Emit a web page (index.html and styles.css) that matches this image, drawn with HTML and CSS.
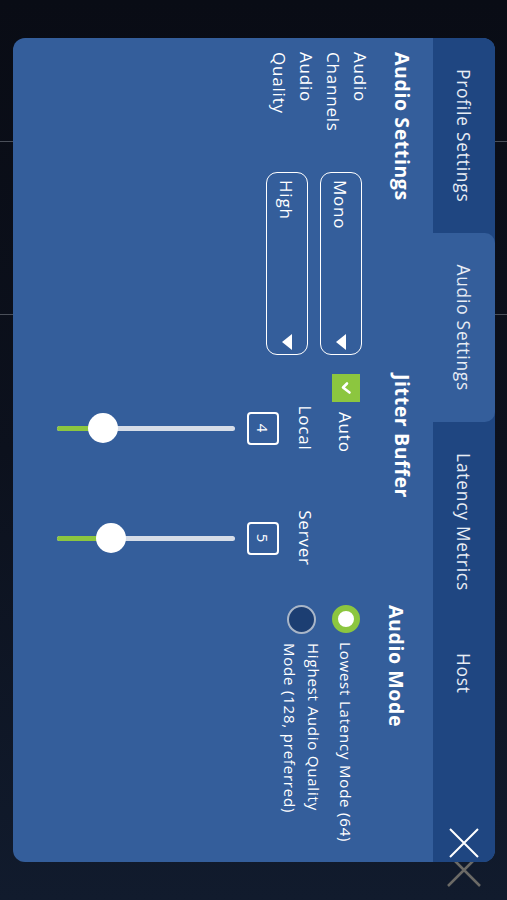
FILE: index.html
```html
<!DOCTYPE html>
<html lang="en">
<head>
    <meta charset="UTF-8">
    <meta name="viewport" content="width=device-width, initial-scale=1.0">
    <title>Audio Settings</title>
    <link rel="stylesheet" href="styles.css">
</head>
<body>
    <div class="screen">
        <div class="stage">
            <svg class="ghost-close" width="36" height="36" viewBox="0 0 36 36">
                <path d="M2 2 L34 34 M34 2 L2 34" stroke="#6b6a66" stroke-width="2.5" fill="none"/>
            </svg>

            <div class="card">
                <div class="tabs">
                    <div class="tab">Profile Settings</div>
                    <div class="tab active">Audio Settings</div>
                    <div class="tab">Latency Metrics</div>
                    <div class="tab">Host</div>
                    <div class="close">
                        <svg width="30" height="30" viewBox="0 0 30 30">
                            <path d="M1 1 L29 29 M29 1 L1 29" stroke="#fff" stroke-width="2" fill="none"/>
                        </svg>
                    </div>
                </div>

                <div class="panel">
                    <section class="col">
                        <h3>Audio Settings</h3>
                        <div class="fields">
                            <label>Audio Channels</label>
                            <div class="select"><span>Mono</span><i class="caret"></i></div>
                            <label>Audio Quality</label>
                            <div class="select"><span>High</span><i class="caret"></i></div>
                        </div>
                    </section>

                    <section class="col">
                        <h3>Jitter Buffer</h3>
                        <div class="check-row">
                            <div class="checkbox">
                                <svg width="28" height="28" viewBox="0 0 28 28">
                                    <path d="M9.5 13 L13.5 17 L18.5 10.5" stroke="#fff" stroke-width="2.6" fill="none" stroke-linecap="round" stroke-linejoin="round"/>
                                </svg>
                            </div>
                            <span>Auto</span>
                        </div>
                        <div class="buffers">
                            <div class="buffer">
                                <div class="buffer-label">Local</div>
                                <div class="value">4</div>
                                <div class="slider">
                                    <div class="fill" style="height: 26%"></div>
                                    <div class="thumb" style="bottom: 26%"></div>
                                </div>
                            </div>
                            <div class="buffer">
                                <div class="buffer-label">Server</div>
                                <div class="value">5</div>
                                <div class="slider">
                                    <div class="fill" style="height: 30.5%"></div>
                                    <div class="thumb" style="bottom: 30.5%"></div>
                                </div>
                            </div>
                        </div>
                    </section>

                    <section class="col col-mode">
                        <h3>Audio Mode</h3>
                        <div class="radio-row">
                            <div class="radio on"></div>
                            <span>Lowest Latency Mode (64)</span>
                        </div>
                        <div class="radio-row second">
                            <div class="radio"></div>
                            <span>Highest Audio Quality<br>Mode (128, preferred)</span>
                        </div>
                    </section>
                </div>
            </div>
        </div>
    </div>
</body>
</html>
```

FILE: styles.css
```css
* {
    box-sizing: border-box;
}
body {
    margin: 0;
    background: #0d1422;
    font-family: "Open Sans", Lato, sans-serif;
    color: #fff;
    letter-spacing: 0.8px;
}
.screen {
    width: 507px;
    height: 900px;
    overflow: hidden;
}
/* the app is in landscape, shown turned a quarter clockwise */
.stage {
    width: 900px;
    height: 507px;
    padding: 12px 38px 13px;
    transform-origin: 0 0;
    transform: translateX(507px) rotate(90deg);
    background:
        linear-gradient(90deg, transparent 141px, #4a4f59 141px, #4a4f59 142px, transparent 142px),
        linear-gradient(90deg, transparent 314px, #4a4f59 314px, #4a4f59 315px, transparent 315px),
        linear-gradient(90deg, #090c15 0%, #0c111d 50%, #111b2d 100%);
}
.ghost-close {
    position: absolute;
    left: 852px;
    top: 25px;
}
.card {
    position: relative;
    z-index: 1;
    height: 100%;
    display: flex;
    flex-direction: column;
    background: #345e9b;
    border-radius: 12px;
    overflow: hidden;
}
.tabs {
    height: 62px;
    display: flex;
    background: #1f4681;
}
.tab {
    padding: 0 31px;
    display: flex;
    align-items: center;
    font-size: 17.3px;
    color: #e8edf5;
}
.tab.active {
    background: #345e9b;
    border-radius: 10px 10px 0 0;
}
.close {
    margin-left: auto;
    margin-right: 4px;
    display: flex;
    align-items: center;
}
.panel {
    flex: 1;
    display: grid;
    grid-template-columns: 322px 231px 1fr;
    padding: 19px 0 0 14px;
}
.col {
    display: flex;
    flex-direction: column;
    align-items: flex-start;
}
h3 {
    margin: 0 0 16px;
    font-size: 19.5px;
    line-height: 24px;
    font-weight: 700;
    letter-spacing: 0.6px;
}
.fields {
    display: grid;
    grid-template-columns: 120px 183px;
    align-items: end;
}
.fields label {
    width: 95px;
    font-size: 17px;
    line-height: 27px;
}
.select {
    height: 42px;
    border: 1.5px solid #fff;
    border-radius: 11px;
    display: flex;
    align-items: center;
    justify-content: space-between;
    padding: 0 4px 0 7px;
    font-size: 17px;
}
.caret {
    width: 0;
    height: 0;
    border-left: 8.5px solid transparent;
    border-right: 8.5px solid transparent;
    border-top: 10px solid #fff;
}
.check-row {
    margin-top: 14px;
    display: flex;
    align-items: center;
    gap: 10px;
    font-size: 17px;
}
.checkbox {
    width: 28px;
    height: 28px;
    background: #8cc63f;
}
.buffers {
    display: flex;
    gap: 42px;
    padding-left: 20px;
    margin-top: 13px;
}
.buffer {
    width: 68px;
    display: flex;
    flex-direction: column;
    align-items: center;
}
.buffer-label {
    font-size: 17px;
    line-height: 27px;
}
.value {
    margin-top: 13px;
    width: 33px;
    height: 32px;
    border: 2px solid #fff;
    border-radius: 4px;
    display: flex;
    align-items: center;
    justify-content: center;
    font-size: 15px;
    letter-spacing: 0;
}
.slider {
    position: relative;
    margin-top: 12px;
    width: 5px;
    height: 178px;
    background: #d6dde8;
    border-radius: 3px;
}
.fill {
    position: absolute;
    left: 0;
    bottom: 0;
    width: 100%;
    background: #8cc63f;
    border-radius: 3px;
}
.thumb {
    position: absolute;
    left: 50%;
    width: 30px;
    height: 30px;
    margin-left: -15px;
    margin-bottom: -15px;
    border-radius: 50%;
    background: #fff;
}
.col-mode h3 {
    margin-top: 6px;
    margin-bottom: 0;
}
.radio-row {
    margin-top: 24px;
    display: flex;
    align-items: center;
    gap: 9px;
    font-size: 15px;
    line-height: 24px;
}
.radio-row.second {
    margin-top: 6px;
}
.radio {
    flex: none;
    width: 29px;
    height: 29px;
    border-radius: 50%;
    background: #1c3e72;
    border: 2px solid #a9b6c8;
}
.radio.on {
    width: 28px;
    height: 28px;
    background: #fff;
    border: 6.5px solid #8cc63f;
}
```
